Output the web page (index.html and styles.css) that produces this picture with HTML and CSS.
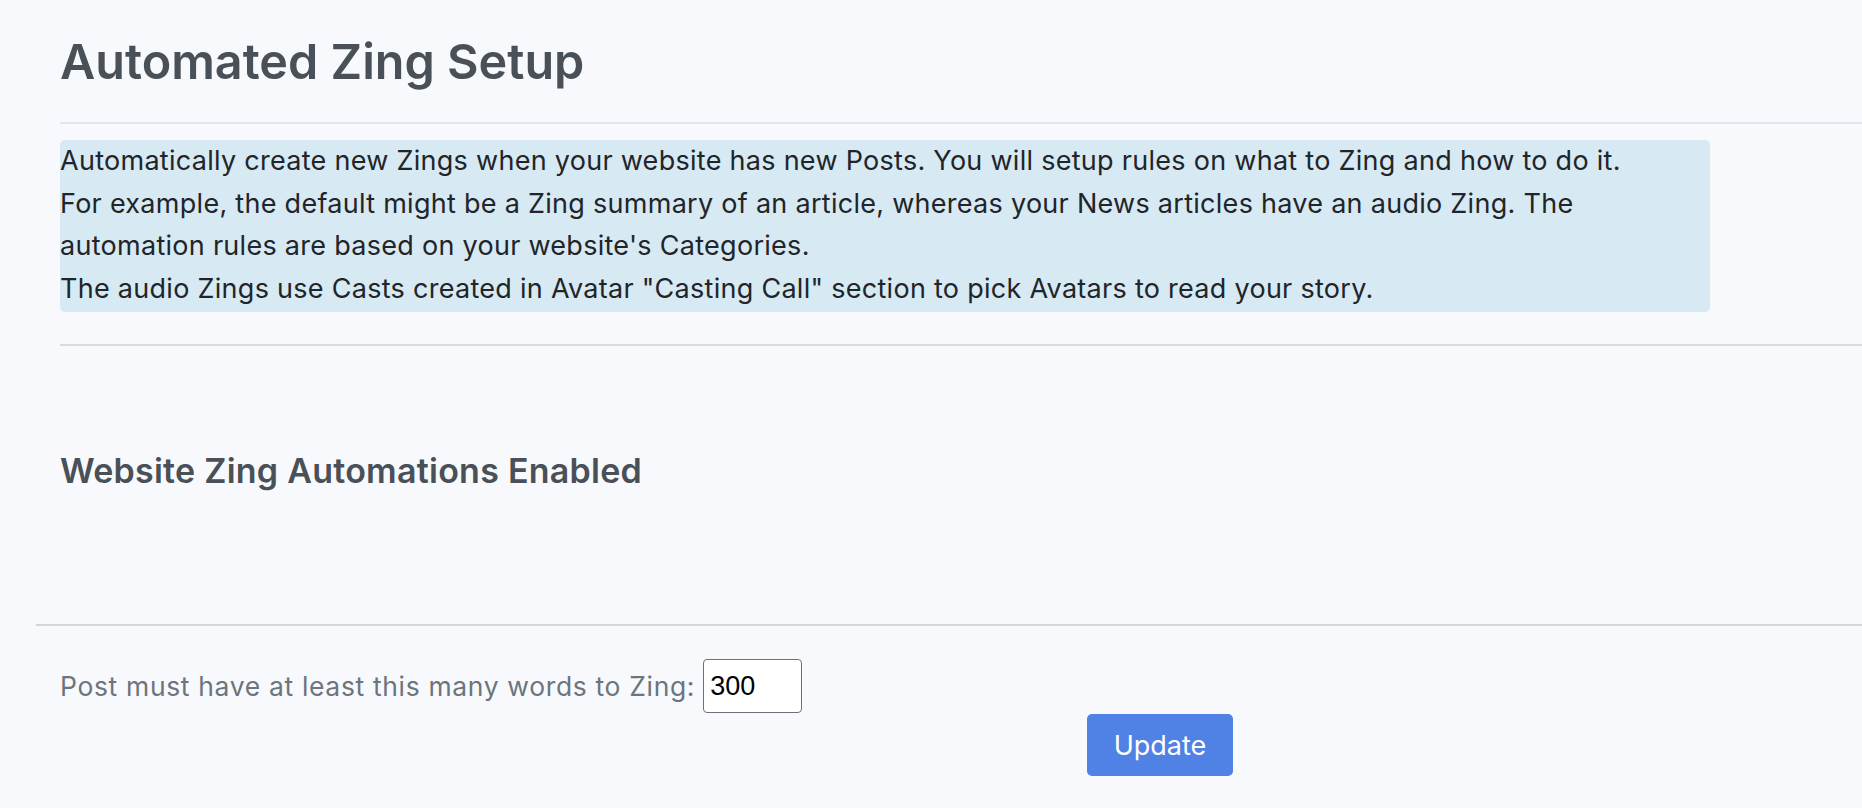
FILE: index.html
```html
<!DOCTYPE html>
<html lang="en">
<head>
<meta charset="utf-8">
<title>Automated Zing Setup</title>
<link rel="stylesheet" href="styles.css">
</head>
<body>
<div class="page">
  <div class="section">
    <h1 class="title">Automated Zing Setup</h1>
    <hr class="rule rule-top">
    <div class="info">Automatically create new Zings when your website has new Posts. You will setup rules on what to Zing and how to do it.<br>For example, the default might be a Zing summary of an article, whereas your News articles have an audio Zing. The<br>automation rules are based on your website's Categories.<br>The audio Zings use Casts created in Avatar "Casting Call" section to pick Avatars to read your story.</div>
    <hr class="rule rule-mid">
    <h2 class="subtitle">Website Zing Automations Enabled</h2>
  </div>
  <hr class="rule rule-bottom">
  <form class="settings">
    <div class="field-row">
      <label class="field-label" for="words">Post must have at least this many words to Zing:</label>
      <input class="field-input" id="words" type="text" value="300">
    </div>
    <div class="actions">
      <button class="btn-update" type="button">Update</button>
    </div>
  </form>
</div>
</body>
</html>
```

FILE: styles.css
```css
html, body {
  margin: 0;
  padding: 0;
}
body {
  background: #f7f9fc;
  font-family: "Inter", "DejaVu Sans", sans-serif;
  color: #212529;
}
.page {
  padding-left: 36px;
  padding-top: 32px;
}
.section {
  padding-left: 24px;
}
.title {
  margin: 0;
  font-size: 48.5px;
  line-height: 60px;
  font-weight: 600;
  color: #495057;
}
.rule {
  border: 0;
  height: 2px;
  margin: 0;
}
.rule-top {
  margin-top: 30px;
  background: #dfe6ec;
}
.info {
  margin-top: 16px;
  width: 1650px;
  background: #d7e9f3;
  border-radius: 5px;
  font-size: 27px;
  line-height: 42.5px;
  letter-spacing: 0.28px;
  padding-bottom: 2px;
}
.rule-mid {
  margin-top: 32px;
  background: #d9dadd;
}
.subtitle {
  margin: 0;
  padding-top: 101px;
  font-size: 34px;
  line-height: 48px;
  letter-spacing: 0.25px;
  font-weight: 600;
  color: #495057;
}
.rule-bottom {
  margin-top: 129px;
  background: #d5d6da;
}
.settings {
  padding-left: 24px;
  padding-top: 33px;
}
.field-row {
  display: flex;
  align-items: center;
  gap: 8px;
}
.field-label {
  font-size: 26.5px;
  letter-spacing: 0.65px;
  color: #6c757d;
}
.field-input {
  box-sizing: border-box;
  width: 99px;
  height: 54px;
  border: 1.5px solid #707070;
  border-radius: 4px;
  background: #fff;
  padding: 0 6px;
  font-family: "Liberation Sans", Arial, sans-serif;
  font-size: 27px;
  color: #000;
}
.actions {
  padding-left: 1027px;
  padding-top: 1px;
}
.btn-update {
  width: 146px;
  height: 62px;
  border: 0;
  border-radius: 5px;
  background: #5081e4;
  color: #fff;
  font-family: "Inter", "DejaVu Sans", sans-serif;
  font-size: 27px;
  padding: 0;
}
```
